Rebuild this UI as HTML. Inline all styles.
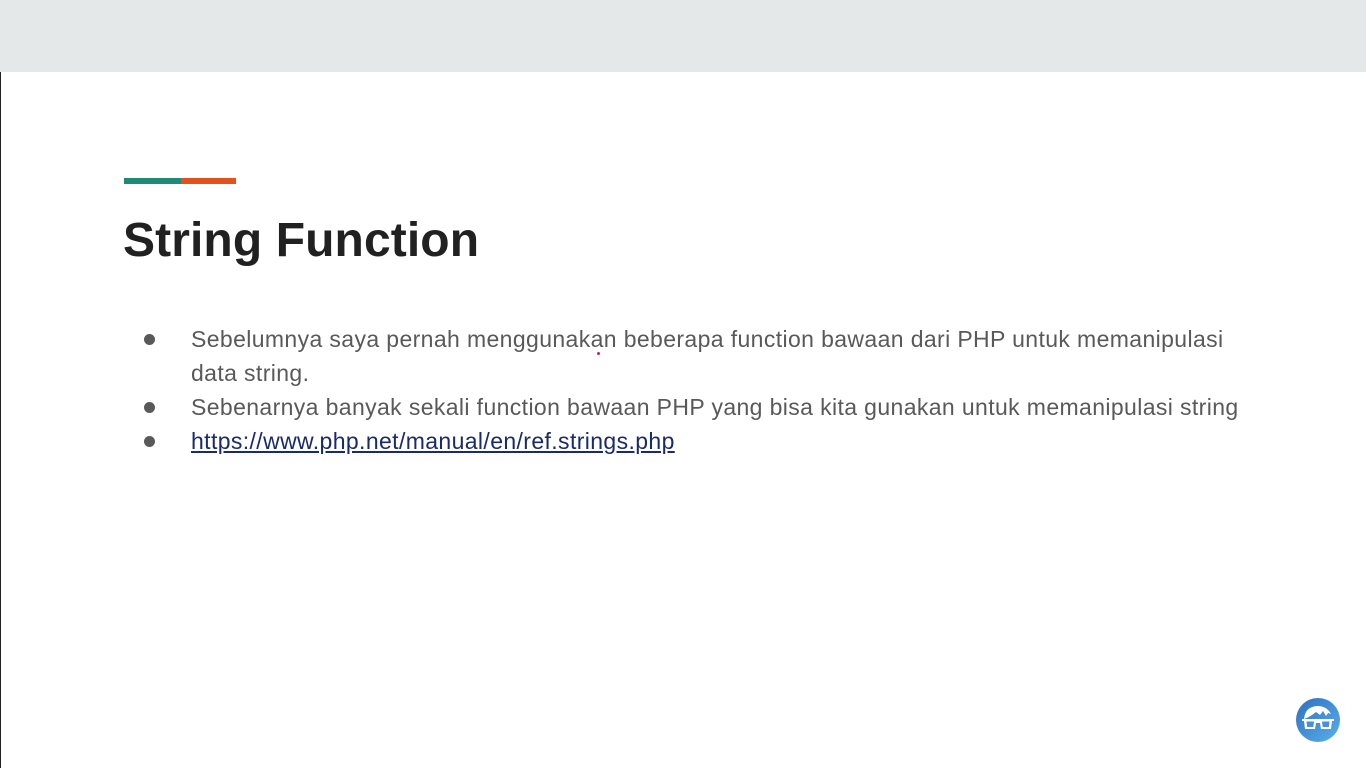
<!DOCTYPE html>
<html><head><meta charset="utf-8"><style>
html,body{margin:0;padding:0}
body{width:1366px;height:768px;position:relative;overflow:hidden;background:#fff;font-family:"Liberation Sans",sans-serif}
.top{position:absolute;left:0;top:0;width:1366px;height:72px;background:#e4e8e8}
.lb{position:absolute;left:0;top:72px;width:1px;height:696px;background:#222}
.a1{position:absolute;left:124px;top:178px;width:57px;height:6px;background:#1f8a78}
.a2{position:absolute;left:181px;top:178px;width:55px;height:6px;background:#e2521a}
h1{position:absolute;left:123px;top:211px;margin:0;font-size:48px;font-weight:bold;color:#212121;line-height:60px;letter-spacing:0.1px}
.t{position:absolute;left:191px;font-size:23px;color:#595959;line-height:34px;white-space:nowrap;letter-spacing:0.38px}
.b{position:absolute;left:144px;width:11px;height:11px;border-radius:50%;background:#595959}
a{color:#1a2b6b;text-decoration:underline}
</style></head><body>
<div class="top"></div><div class="lb"></div>
<div class="a1"></div><div class="a2"></div>
<h1>String Function</h1>
<div class="b" style="top:334px"></div>
<div class="t" style="top:322px">Sebelumnya saya pernah menggunakan beberapa function bawaan dari PHP untuk memanipulasi</div>
<div class="t" style="top:356px">data string.</div>
<div class="b" style="top:402px"></div>
<div class="t" style="top:390px">Sebenarnya banyak sekali function bawaan PHP yang bisa kita gunakan untuk memanipulasi string</div>
<div class="b" style="top:436px"></div>
<div class="t" style="top:424px"><a>https://www.php.net/manual/en/ref.strings.php</a></div>
<div style="position:absolute;left:597px;top:352px;width:3px;height:3px;border-radius:50%;background:#d0204a"></div>
<svg style="position:absolute;left:1296px;top:698px" width="44" height="44" viewBox="0 0 44 44">
<defs><linearGradient id="g" x1="0" y1="0" x2="1" y2="1"><stop offset="0" stop-color="#2f6fc0"/><stop offset="1" stop-color="#5ab0ea"/></linearGradient></defs>
<circle cx="22" cy="22" r="22" fill="url(#g)"/>
<path d="M8 21 Q9 9 21 8 Q31 8 35 16 L32 15 L30 18 L27 13 L24 17 L20 14 Q14 19 8 21Z" fill="#fff"/>
<path d="M6 21 H38 V23 H36 L35 31 H25 L24 25 H20 L19 31 H9 L8 23 H6Z" fill="#fff"/>
<path d="M10.5 23.5 H18 L17.3 29 H11.2Z M26 23.5 H33.5 L32.8 29 H26.7Z" fill="#4a8fd8"/>
</svg>
</body></html>
